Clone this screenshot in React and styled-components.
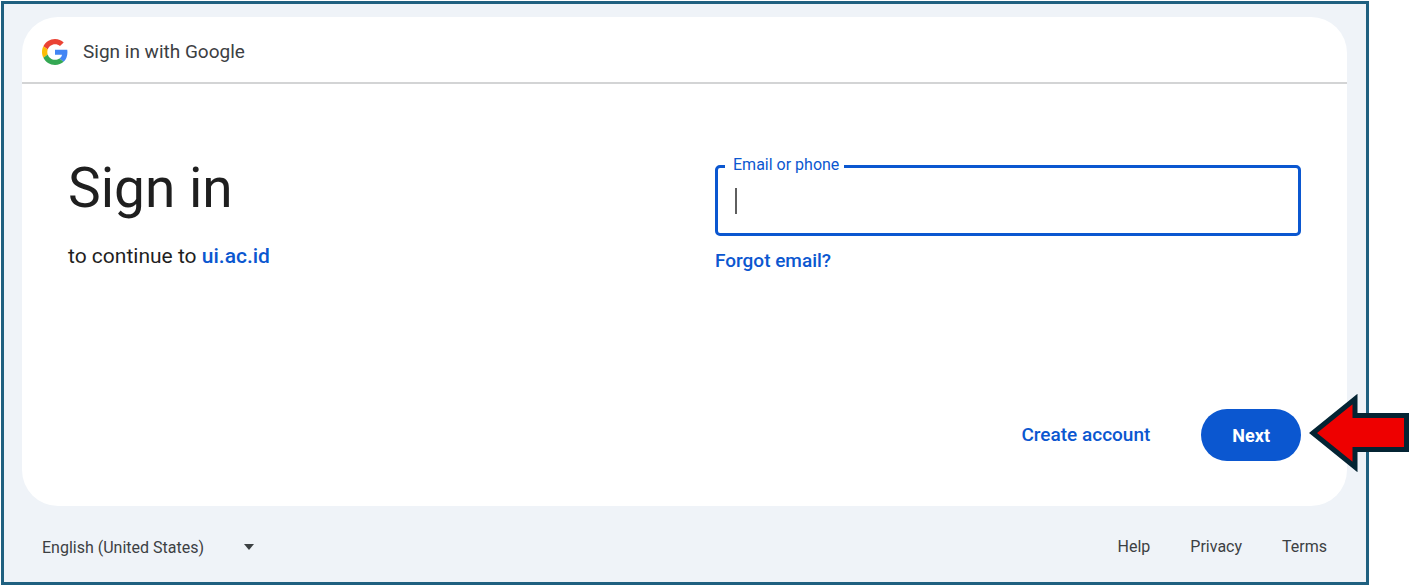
import { useState } from 'react'
import styled, { createGlobalStyle } from 'styled-components'

const GlobalStyle = createGlobalStyle`
  * {
    box-sizing: border-box;
  }

  body {
    margin: 0;
    background: #ffffff;
    color: #1f1f1f;
    font-family: Roboto, 'Liberation Sans', sans-serif;
  }
`

const Page = styled.div`
  position: relative;
  padding: 1px 40px 1px 1px;
`

const Frame = styled.div`
  padding: 13px 19px 0 18px;
  border: 3px solid #1f6080;
  background: #eff3f8;
`

const Card = styled.main`
  border-radius: 36px;
  background: #ffffff;
`

const CardHeader = styled.header`
  display: flex;
  align-items: center;
  gap: 15px;
  height: 67px;
  padding: 4px 20px 0;
  border-bottom: 2px solid #d3d4d5;
  color: #3c4043;
  font-size: 19px;
`

const CardBody = styled.div`
  display: grid;
  grid-template-columns: 1fr 1fr;
  gap: 61px;
  padding: 70px 46px 0;
`

const Title = styled.h1`
  margin: 0;
  font-size: 55px;
  font-weight: 400;
  line-height: 68px;
`

const Subtitle = styled.p`
  margin: 22px 0 0;
  font-size: 21px;
  line-height: 24px;
`

const TextLink = styled.a`
  color: #0b57d0;
  font-size: ${({ $size }) => $size || '19px'};
  font-weight: 500;
  line-height: 24px;
  text-decoration: none;
`

const LoginForm = styled.form`
  padding-top: 11px;
`

const Field = styled.div`
  position: relative;
  margin-bottom: 13px;
`

const FieldLabel = styled.label`
  position: absolute;
  top: -10px;
  left: 10px;
  padding: 0 5px 0 8px;
  background: #ffffff;
  color: #0b57d0;
  font-size: 16px;
  line-height: 20px;
`

const FieldInput = styled.input`
  display: block;
  width: 100%;
  height: 71px;
  padding: 0 18px;
  border: 3px solid #0b57d0;
  border-radius: 5px;
  outline: none;
  background: #ffffff;
  caret-color: transparent;
  color: #1f1f1f;
  font-family: inherit;
  font-size: 20px;
`

const Caret = styled.span`
  position: absolute;
  top: 23px;
  left: 20px;
  width: 2px;
  height: 26px;
  background: #5f5f5f;
  pointer-events: none;
`

const Actions = styled.div`
  display: flex;
  align-items: center;
  justify-content: flex-end;
  gap: 51px;
  padding: 136px 46px 45px;
`

const NextButton = styled.button`
  height: 52px;
  padding: 0 31px;
  border: 0;
  border-radius: 26px;
  background: #0b57d0;
  color: #ffffff;
  font-family: inherit;
  font-size: 18px;
  font-weight: 700;
`

const Footer = styled.footer`
  display: flex;
  align-items: center;
  justify-content: space-between;
  height: 76px;
  padding: 6px 20px 0;
  color: #3c4043;
  font-size: 16px;
`

const LanguagePicker = styled.div`
  display: grid;
  align-items: center;
`

const LanguageSelect = styled.select`
  grid-area: 1 / 1;
  width: 216px;
  height: 24px;
  padding: 0;
  border: 0;
  appearance: none;
  background: transparent;
  color: inherit;
  font: inherit;
`

const SelectArrow = styled.svg`
  grid-area: 1 / 1;
  justify-self: end;
  margin-right: 4px;
  pointer-events: none;
`

const FooterNav = styled.nav`
  display: flex;
  gap: 40px;
`

const FooterLink = styled.a`
  color: inherit;
  line-height: 24px;
  text-decoration: none;
`

const Pointer = styled.svg`
  position: absolute;
  top: 394px;
  right: 0;
`

function GoogleLogo() {
  return (
    <svg width="26" height="26" viewBox="0 0 48 48" aria-hidden="true">
      <path
        fill="#EA4335"
        d="M24 9.5c3.54 0 6.71 1.22 9.21 3.6l6.85-6.85C35.9 2.38 30.47 0 24 0 14.62 0 6.51 5.38 2.56 13.22l7.98 6.19C12.43 13.72 17.74 9.5 24 9.5z"
      />
      <path
        fill="#4285F4"
        d="M46.98 24.55c0-1.57-.15-3.09-.38-4.55H24v9.02h12.94c-.58 2.96-2.26 5.48-4.78 7.18l7.73 6c4.51-4.18 7.09-10.36 7.09-17.65z"
      />
      <path
        fill="#FBBC05"
        d="M10.53 28.59c-.48-1.45-.76-2.99-.76-4.59s.27-3.14.76-4.59l-7.98-6.19C.92 16.46 0 20.12 0 24c0 3.88.92 7.54 2.56 10.78l7.97-6.19z"
      />
      <path
        fill="#34A853"
        d="M24 48c6.48 0 11.93-2.13 15.89-5.81l-7.73-6c-2.15 1.45-4.92 2.3-8.16 2.3-6.26 0-11.57-4.22-13.47-9.91l-7.98 6.19C6.51 42.62 14.62 48 24 48z"
      />
    </svg>
  )
}

const footerLinks = ['Help', 'Privacy', 'Terms']

export default function App() {
  const [email, setEmail] = useState('')

  return (
    <>
      <GlobalStyle />
      <Page>
        <Frame>
          <Card>
            <CardHeader>
              <GoogleLogo />
              <span>Sign in with Google</span>
            </CardHeader>
            <CardBody>
              <div>
                <Title>Sign in</Title>
                <Subtitle>
                  to continue to{' '}
                  <TextLink href="#app" $size="21px">
                    ui.ac.id
                  </TextLink>
                </Subtitle>
              </div>
              <LoginForm id="login" onSubmit={(e) => e.preventDefault()}>
                <Field>
                  <FieldInput
                    id="email"
                    type="text"
                    value={email}
                    onChange={(e) => setEmail(e.target.value)}
                  />
                  <FieldLabel htmlFor="email">Email or phone</FieldLabel>
                  {!email && <Caret />}
                </Field>
                <TextLink href="#forgot">Forgot email?</TextLink>
              </LoginForm>
            </CardBody>
            <Actions>
              <TextLink href="#create">Create account</TextLink>
              <NextButton type="submit" form="login">
                Next
              </NextButton>
            </Actions>
          </Card>
          <Footer>
            <LanguagePicker>
              <LanguageSelect aria-label="Language" defaultValue="en-US">
                <option value="en-US">English (United States)</option>
              </LanguageSelect>
              <SelectArrow width="10" height="6" viewBox="0 0 10 6">
                <path d="M0 0h10L5 6z" fill="#3c4043" />
              </SelectArrow>
            </LanguagePicker>
            <FooterNav>
              {footerLinks.map((link) => (
                <FooterLink key={link} href={`#${link.toLowerCase()}`}>
                  {link}
                </FooterLink>
              ))}
            </FooterNav>
          </Footer>
        </Frame>
        <Pointer width="101" height="78" viewBox="0 0 101 78" aria-hidden="true">
          <path
            d="M5 39L47 5V21.5H98.5V55.5H47V73z"
            fill="#ee0000"
            stroke="#042433"
            strokeWidth="5"
          />
        </Pointer>
      </Page>
    </>
  )
}
